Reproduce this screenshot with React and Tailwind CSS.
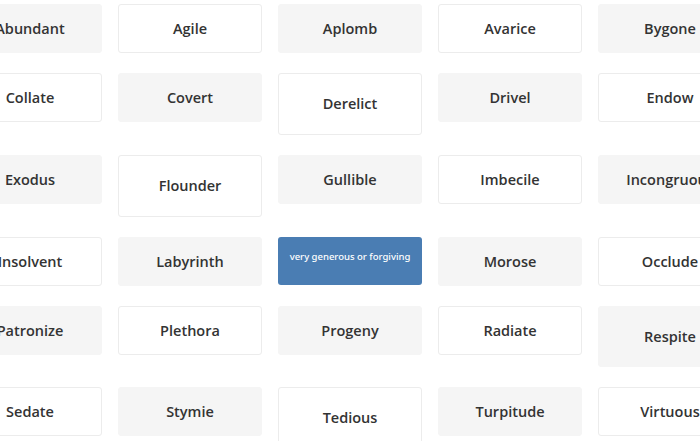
import React from "react";

const rows = [
  [["Abundant", "g"], ["Agile", "w"], ["Aplomb", "g"], ["Avarice", "w"], ["Bygone", "g"]],
  [["Collate", "w"], ["Covert", "g"], ["Derelict", "w", "h-[62px]"], ["Drivel", "g"], ["Endow", "w"]],
  [["Exodus", "g"], ["Flounder", "w", "h-[62px]"], ["Gullible", "g"], ["Imbecile", "w"], ["Incongruous", "g"]],
  [["Insolvent", "w"], ["Labyrinth", "g"], ["very generous or forgiving", "b"], ["Morose", "g"], ["Occlude", "w"]],
  [["Patronize", "g"], ["Plethora", "w"], ["Progeny", "g"], ["Radiate", "w"], ["Respite", "g", "h-[61px]"]],
  [["Sedate", "w"], ["Stymie", "g"], ["Tedious", "w", "h-[62px]"], ["Turpitude", "g"], ["Virtuous", "w"]],
];

function Card({ text, kind, tall }) {
  if (kind === "b") {
    return (
      <div className="w-[144px] h-[48px] shrink-0 rounded-[3px] bg-[#4a7db3] flex justify-center pt-[15px]">
        <span
          className="text-[9.5px] leading-[10px] text-white font-medium whitespace-nowrap"
          style={{ fontFamily: "'Noto Sans', sans-serif" }}
        >
          {text}
        </span>
      </div>
    );
  }
  const h = tall || "h-[49px]";
  const bg =
    kind === "g"
      ? "bg-[#f5f5f5] border border-[#f5f5f5]"
      : "bg-white border border-[#ececec]";
  return (
    <div
      className={`w-[144px] ${h} shrink-0 rounded-[3px] ${bg} flex items-center justify-center`}
    >
      <span className="text-[14.5px] font-semibold text-[#333333] whitespace-nowrap">
        {text}
      </span>
    </div>
  );
}

export default function App() {
  return (
    <div
      className="w-[700px] h-[441px] overflow-hidden bg-white"
      style={{ fontFamily: "'Open Sans', sans-serif" }}
    >
      <div className="ml-[-42px] pt-[4px] w-[784px] flex flex-col gap-[20px]">
        {rows.map((row, i) => (
          <div key={i} className="flex items-start gap-[16px]">
            {row.map(([t, k, tall]) => (
              <Card key={t} text={t} kind={k} tall={tall} />
            ))}
          </div>
        ))}
      </div>
    </div>
  );
}
